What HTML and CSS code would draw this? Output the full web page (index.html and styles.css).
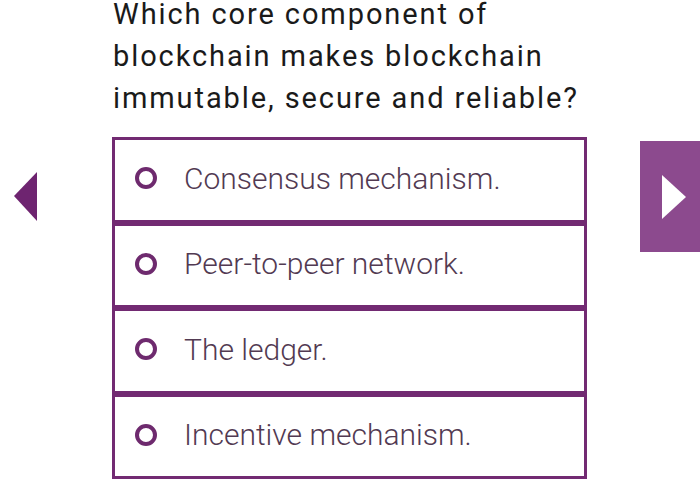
FILE: index.html
```html
<!DOCTYPE html>
<html>
<head>
<meta charset="utf-8">
<link rel="stylesheet" href="styles.css">
</head>
<body>
<div class="page">
  <h1 class="question">Which core component of<br>blockchain makes blockchain<br>immutable, secure and reliable?</h1>
  <div class="row">
    <div class="prev">
      <svg class="prev-icon" width="24" height="50" viewBox="0 0 24 50"><polygon points="23,0 0,24 23,49" fill="#6e2470"/></svg>
    </div>
    <div class="options">
      <div class="option"><span class="radio"></span><span class="label">Consensus mechanism.</span></div>
      <div class="option"><span class="radio"></span><span class="label">Peer-to-peer network.</span></div>
      <div class="option"><span class="radio"></span><span class="label">The ledger.</span></div>
      <div class="option"><span class="radio"></span><span class="label">Incentive mechanism.</span></div>
    </div>
    <div class="next">
      <svg class="next-icon" width="25" height="44" viewBox="0 0 25 44"><polygon points="0,0 24,22 0,44" fill="#ffffff"/></svg>
    </div>
  </div>
</div>
</body>
</html>
```
FILE: styles.css
```css
html, body {
  margin: 0;
  padding: 0;
  background: #ffffff;
  overflow: hidden;
}
.page {
  width: 700px;
  height: 495px;
  overflow: hidden;
  font-family: Roboto, "Liberation Sans", sans-serif;
}
.question {
  margin: -7px 0 0 113px;
  font-size: 29px;
  font-weight: 400;
  line-height: 42px;
  color: #1a1a1a;
  letter-spacing: 1.9px;
}
.row {
  display: flex;
  align-items: flex-start;
  margin-top: 18px;
}
.prev {
  width: 112px;
  flex: none;
  padding: 35px 0 0 14px;
  box-sizing: border-box;
}
.prev-icon {
  display: block;
}
.options {
  width: 475px;
  flex: none;
  display: flex;
  flex-direction: column;
}
.option {
  height: 85.5px;
  box-sizing: border-box;
  border: 3px solid #722a72;
  display: flex;
  align-items: center;
  padding: 0 0 3px 20px;
}
.radio {
  width: 22px;
  height: 22px;
  box-sizing: border-box;
  border: 4px solid #6e2a6e;
  border-radius: 50%;
  flex: none;
}
.label {
  margin-left: 27px;
  font-size: 30px;
  font-weight: 300;
  color: #523a52;
}
.next {
  margin: 4px 0 0 53px;
  width: 70px;
  height: 111px;
  flex: none;
  background: #8c4a8e;
  display: flex;
  align-items: center;
  padding-left: 22px;
  box-sizing: border-box;
}
.next-icon {
  display: block;
}
```
